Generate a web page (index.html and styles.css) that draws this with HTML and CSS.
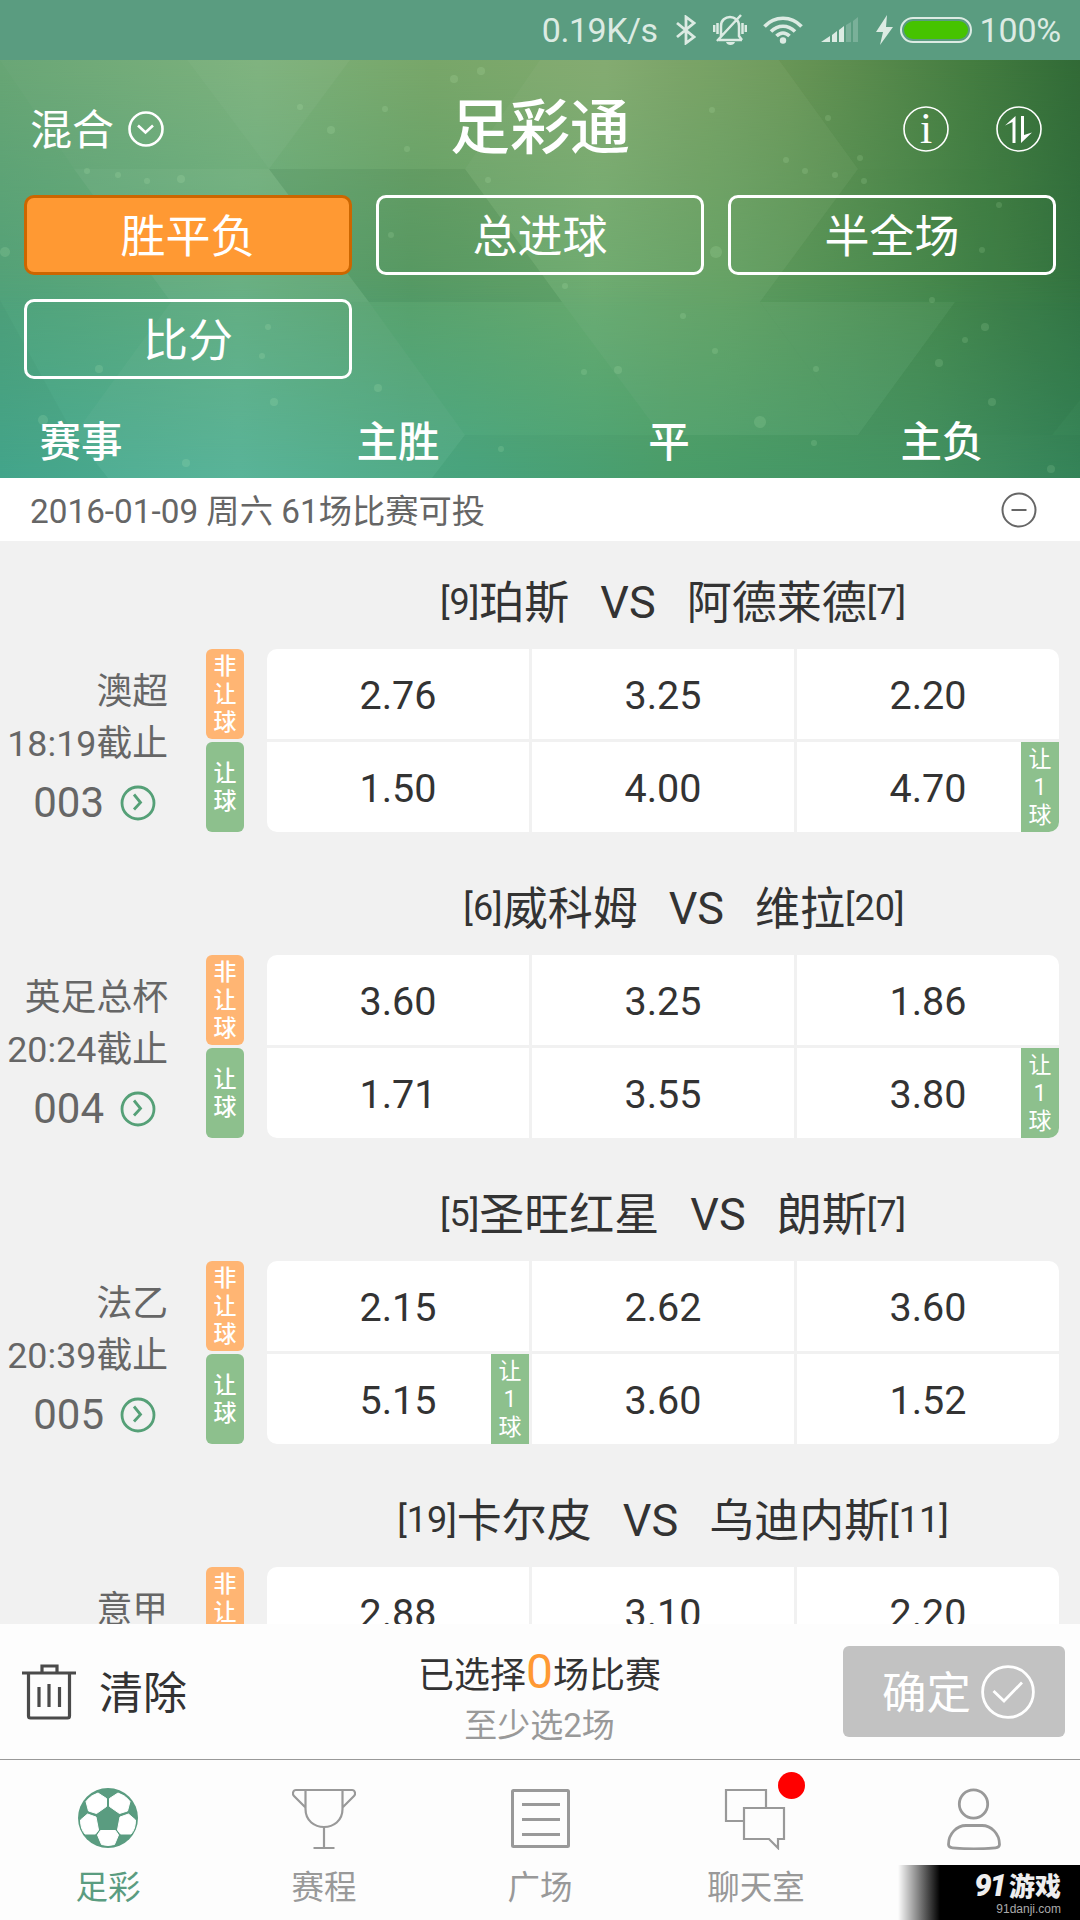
FILE: index.html
```html
<!DOCTYPE html>
<html lang="zh-CN">
<head>
    <meta charset="UTF-8">
    <meta name="viewport" content="width=device-width, initial-scale=1.0">
    <title>足彩通</title>
    <link rel="stylesheet" href="styles.css">
</head>
<body>

    <div class="status">
        <span class="speed">0.19K/s</span>
        <svg class="s-bt" width="20" height="30" viewBox="0 0 20 30"><path d="M1 8l17 14-8 6V2l8 6L1 22" fill="none" stroke="#dcebe3" stroke-width="2.8"/></svg>
        <svg class="s-bell" width="34" height="32" viewBox="0 0 34 32">
            <path d="M6 26h23M8 24V12c0-12 18-12 18 0v10l3 4M28 1L4 27M1.200 11v7M4.500 9v11M29.500 9v11M32.800 11v7" fill="none" stroke="#dcebe3" stroke-width="2.500"/>
            <path d="M13 28h9c-1 4-8 4-9 0z" fill="#dcebe3"/>
        </svg>
        <svg class="s-wifi" width="40" height="28" viewBox="0 0 40 28">
            <path d="M1.500 10.500c10-11 27-11 37 0M8 15.500c7-7 17-7 24 0M13.500 20c4-4 9-4 13 0" fill="none" stroke="#dcebe3" stroke-width="3.600"/>
            <circle cx="20" cy="24.500" r="3.200" fill="#dcebe3"/>
        </svg>
        <svg class="s-signal" width="38" height="26" viewBox="0 0 38 26">
            <path d="M0 25l9-6v6zM11 18l5-4v11h-5zM18 13l5-4v16h-5z" fill="#dcebe3"/>
            <path d="M25 8l5-3v20h-5zM32 4l5-4v25h-5z" fill="#dcebe3" opacity=".25"/>
        </svg>
        <svg class="s-bolt" width="17" height="30" viewBox="0 0 17 30"><path d="M11 0L0 17h7L4 30l13-18h-7z" fill="#dcebe3"/></svg>
        <div class="battery"></div>
        <span class="percent">100%</span>
    </div>

    <header class="header">
        <!-- 三角拼接背景 -->
        <svg class="header-bg" width="1080" height="418" viewBox="0 60 1080 418">
            <g fill="#fff">
                <path d="M187 60L269 169 350 60z" opacity=".04"/>
                <path d="M0 60L74 169H269L187 60z" opacity=".02"/>
                <path d="M74 169H269L369 302H171z" opacity=".05"/>
                <path d="M171 302L74 435 108 478H432L465 435 369 302z" opacity=".03"/>
                <path d="M540 60L465 169 562 302 661 435H858L760 302 858 169 779 60z" opacity=".03"/>
                <path d="M760 302H955L858 435z" opacity=".03"/>
            </g>
            <g fill="#003c1e">
                <path d="M269 169H465L562 302H369z" opacity=".07"/>
                <path d="M858 169L760 302H1080V169z" opacity=".03"/>
                <path d="M779 60L858 169H1080V60z" opacity=".02"/>
                <path d="M955 302L858 435H1052L1080 400V302z" opacity=".04"/>
                <path d="M0 300L74 435 108 478H0z" opacity=".03"/>
                <path d="M465 435H1080V478H432z" opacity=".03"/>
            </g>
            <g fill="#d2ffc8" opacity=".13">
                <circle cx="481" cy="71" r="4"/><circle cx="454" cy="79" r="4"/><circle cx="331" cy="130" r="4"/>
                <circle cx="407" cy="149" r="3"/><circle cx="385" cy="109" r="3"/><circle cx="300" cy="107" r="3"/>
                <circle cx="181" cy="179" r="4"/><circle cx="147" cy="181" r="3"/><circle cx="118" cy="175" r="3"/>
                <circle cx="87" cy="171" r="3"/><circle cx="488" cy="180" r="3"/><circle cx="786" cy="160" r="3"/>
                <circle cx="828" cy="118" r="3"/><circle cx="860" cy="158" r="3"/><circle cx="805" cy="171" r="3"/>
                <circle cx="835" cy="175" r="3"/><circle cx="864" cy="181" r="3"/><circle cx="712" cy="110" r="3"/>
                <circle cx="716" cy="252" r="6"/><circle cx="999" cy="205" r="3"/><circle cx="982" cy="250" r="3"/>
                <circle cx="932" cy="300" r="3"/><circle cx="985" cy="327" r="4"/><circle cx="965" cy="340" r="3"/>
                <circle cx="939" cy="363" r="4"/><circle cx="992" cy="402" r="4"/><circle cx="760" cy="422" r="6"/>
                <circle cx="816" cy="369" r="3"/><circle cx="715" cy="351" r="3"/><circle cx="683" cy="316" r="3"/>
                <circle cx="618" cy="370" r="4"/><circle cx="584" cy="372" r="3"/><circle cx="378" cy="388" r="4"/>
                <circle cx="274" cy="402" r="4"/><circle cx="186" cy="463" r="4"/><circle cx="43" cy="420" r="5"/>
                <circle cx="99" cy="369" r="4"/><circle cx="262" cy="356" r="3"/><circle cx="268" cy="327" r="3"/>
                <circle cx="565" cy="286" r="3"/><circle cx="814" cy="443" r="3"/><circle cx="1051" cy="469" r="4"/>
                <circle cx="5" cy="252" r="5"/><circle cx="391" cy="235" r="3"/><circle cx="501" cy="449" r="3"/>
            </g>
        </svg>

        <div class="topbar">
            <div class="mode">
                <span>混合</span>
                <svg width="38" height="38" viewBox="0 0 38 38" fill="none" stroke="#fff" stroke-width="2.600"><circle cx="19" cy="19" r="16.500"/><path d="M11 15.500l7.500 7 7.500-7"/></svg>
            </div>
            <h1>足彩通</h1>
            <div class="tools">
                <svg width="48" height="48" viewBox="0 0 48 48">
                    <circle cx="24" cy="24" r="22" fill="none" stroke="#fff" stroke-width="1.600"/>
                    <text class="info-i" x="24" y="38" text-anchor="middle">i</text>
                </svg>
                <svg width="48" height="48" viewBox="0 0 48 48">
                    <circle cx="24" cy="24" r="22" fill="none" stroke="#fff" stroke-width="1.600"/>
                    <path d="M17.500 38V17L10 20.500 20.500 11v27zM26 11h3v19l8-2.500L26 38z" fill="#fff"/>
                </svg>
            </div>
        </div>

        <div class="plays">
            <button class="play active">胜平负</button>
            <button class="play">总进球</button>
            <button class="play">半全场</button>
            <button class="play">比分</button>
        </div>

        <div class="columns">
            <span>赛事</span>
            <span>主胜</span>
            <span>平</span>
            <span class="lose">主负</span>
        </div>
    </header>

    <div class="date">
        <span>2016-01-09 周六 61场比赛可投</span>
        <svg width="38" height="38" viewBox="0 0 38 38" fill="none" stroke="#666" stroke-width="2"><circle cx="19" cy="19" r="16.500"/><path d="M11.500 19h15"/></svg>
    </div>

    <main class="list" id="list">
        <!-- 比赛列表 -->
    </main>

    <div class="bar">
        <div class="clear">
            <svg width="54" height="56" viewBox="0 0 54 56" fill="none" stroke="#4a4a4a" stroke-width="3.200"><path d="M0 9h54M20 9V2h15v7M6.500 9v43q0 2 2 2h37q2 0 2-2V9M17 23v20M27 20v23M37.500 23v20"/></svg>
            <span>清除</span>
        </div>
        <div class="picked">
            <p class="count">已选择<b>0</b>场比赛</p>
            <p class="hint">至少选2场</p>
        </div>
        <button class="confirm">
            <span>确定</span>
            <svg width="54" height="54" viewBox="0 0 54 54" fill="none" stroke="#fff" stroke-width="2.800"><circle cx="27" cy="27" r="25.400"/><path d="M12.500 26L23 36 41 17.500"/></svg>
        </button>
    </div>

    <nav class="nav">
        <a class="on">
            <svg width="64" height="64" viewBox="0 0 64 64">
                <circle cx="32" cy="32" r="30" fill="#5a9c80"/>
                <g fill="#fff" stroke="#fff" stroke-width="1" stroke-linejoin="round">
                    <path d="M30.500 12.500v8L20.500 27.500 12.500 25 10 15.500Q14 9.500 22 7z"/>
                    <path d="M33.500 12.500v8l10 7 8-2.500 2.500-9.500Q50 9.500 42 7z"/>
                    <path d="M11.500 28l8.500 3 2.500 13-3 4H9Q4.500 43 4.500 34z"/>
                    <path d="M52.500 28l-8.500 3-2.500 13 3 4H55Q59.500 43 59.500 34z"/>
                    <path d="M24.500 44.500h15l3 4.500-4 9.500Q32 60.500 25.500 58.500l-4-9.500z"/>
                </g>
            </svg>
            足彩
        </a>
        <a>
            <svg width="64" height="64" viewBox="0 0 64 64" fill="none" stroke="#999" stroke-width="2.200"><path d="M4 4h56c3 0 4 4 2 6L51 21M4 4C1 4 0 8 2 10L13 21M13.500 4v19c0 24 37 24 37 0V4M32 41v21M21.500 62h21"/></svg>
            赛程
        </a>
        <a>
            <svg width="64" height="64" viewBox="0 0 64 64" fill="none" stroke="#999" stroke-width="3"><rect x="4.500" y="4.500" width="56" height="56" rx="1"/><path d="M14 18.500h38M14 33.500h38M14 48.500h38"/></svg>
            广场
        </a>
        <a>
            <svg width="64" height="64" viewBox="0 0 64 64" fill="none" stroke="#999" stroke-width="2.200"><path d="M20 35H2V4h40v18M20 22h40v31h-6v9l-9-9H20z"/></svg>
            聊天室
            <i class="dot"></i>
        </a>
        <a>
            <svg width="64" height="64" viewBox="0 0 64 64" fill="none" stroke="#999" stroke-width="2.800"><circle cx="33.500" cy="18" r="14.200"/><path d="M26 39.500h16c9 0 17.500 8 17.500 19 0 2-1 3-4 3.300-11 1-32 1-43 0-3-.3-4-1.300-4-3.300 0-11 8.500-19 17.500-19z"/></svg>
        </a>
    </nav>

    <div class="mark">
        <p class="mark-name"><em>91</em>游戏</p>
        <p class="mark-url">91danji.com</p>
    </div>

    <script>
        // give: 让球标签所在的列
        const matches = [
            { league: '澳超', time: '18:19', no: '003', home: ['[9]', '珀斯'], away: ['阿德莱德', '[7]'], odds: ['2.76', '3.25', '2.20'], letOdds: ['1.50', '4.00', '4.70'], give: 2 },
            { league: '英足总杯', time: '20:24', no: '004', home: ['[6]', '威科姆'], away: ['维拉', '[20]'], odds: ['3.60', '3.25', '1.86'], letOdds: ['1.71', '3.55', '3.80'], give: 2, indent: true },
            { league: '法乙', time: '20:39', no: '005', home: ['[5]', '圣旺红星'], away: ['朗斯', '[7]'], odds: ['2.15', '2.62', '3.60'], letOdds: ['5.15', '3.60', '1.52'], give: 0 },
            { league: '意甲', home: ['[19]', '卡尔皮'], away: ['乌迪内斯', '[11]'], odds: ['2.88', '3.10', '2.20'] }
        ];

        const arrow = '<svg width="36" height="36" viewBox="0 0 36 36" fill="none" stroke="#55a077" stroke-width="2.800"><circle cx="18" cy="18" r="16"/><path d="M14 9.500l6.500 8-6.500 7"/></svg>';

        function letRow(m) {
            if (!m.letOdds) return '';
            return m.letOdds.map((o, i) =>
                `<div class="odd">${o}${i === m.give ? '<span class="give">让<br>1<br>球</span>' : ''}</div>`
            ).join('');
        }

        document.getElementById('list').innerHTML = matches.map(m => `
            <section class="match">
                <div class="teams${m.indent ? ' indent' : ''}"><small>${m.home[0]}</small><span class="team">${m.home[1]}</span><span class="vs">VS</span><span class="team">${m.away[0]}</span><small>${m.away[1]}</small></div>
                <div class="info">
                    <p>${m.league}</p>
                    ${m.time ? `<p>${m.time}截止</p><p class="no">${m.no}${arrow}</p>` : ''}
                </div>
                <div class="tags">
                    <span class="tag orange">${m.letOdds ? '非<br>让<br>球' : '非<br>让'}</span>
                    ${m.letOdds ? '<span class="tag green">让<br>球</span>' : ''}
                </div>
                <div class="odds">
                    ${m.odds.map(o => `<div class="odd">${o}</div>`).join('')}
                    ${letRow(m)}
                </div>
            </section>`).join('');
    </script>

</body>
</html>
```

FILE: styles.css
```css
* {
    box-sizing: border-box;
}

body {
    margin: 0;
    width: 1080px;
    height: 1920px;
    position: relative;
    overflow: hidden;
    display: flex;
    flex-direction: column;
    background: #f1f1f1;
    color: #333;
    font-family: Roboto, "Noto Sans CJK SC", sans-serif;
}

h1, p {
    margin: 0;
    font-weight: normal;
}

svg {
    display: block;
    flex: none;
}

button {
    font-family: inherit;
    padding: 0;
    color: #fff;
}

/* 状态栏 */
.status {
    height: 60px;
    flex: none;
    display: flex;
    align-items: center;
    justify-content: flex-end;
    padding-right: 19px;
    background: #5a9c80;
    color: #dcebe3;
    font-size: 34px;
}

.speed { letter-spacing: -.5px; }
.s-bt { margin-left: 18px; }
.s-bell { margin-left: 17px; }
.s-wifi { margin-left: 16px; }
.s-signal { margin-left: 18px; }
.s-bolt { margin-left: 17px; }

.battery {
    width: 72px;
    height: 26px;
    margin-left: 7px;
    border: 2px solid #dcebe3;
    border-radius: 13px;
    padding: 2px;
    background: #46c300;
    background-clip: content-box;
}

.percent {
    margin-left: 8px;
    letter-spacing: -.2px;
}

/* 顶部 */
.header {
    height: 418px;
    flex: none;
    position: relative;
    color: #fff;
    background: linear-gradient(90deg, #46a98f, #54b296 22%, #4ba882 43%, #4ca16d 62%, #469666 85%, #37875b);
}

.header::before,
.header::after {
    content: "";
    position: absolute;
    left: 0;
    top: 0;
    width: 100%;
    height: 100%;
}

.header::before {
    background: linear-gradient(90deg, #51a178, #60ab7c 22%, #5aa068 38%, #6aaa6d 55%, #619f61 68%, #488a4d 87%, #357542);
    -webkit-mask-image: linear-gradient(#000 50%, transparent);
    mask-image: linear-gradient(#000 50%, transparent);
}

.header::after {
    background: linear-gradient(90deg, #68a574, #7bb07a 24%, #78a669 40%, #80a96d 56%, #6b9757 73%, #467e41 90%, #336c37);
    -webkit-mask-image: linear-gradient(#000, transparent 60%);
    mask-image: linear-gradient(#000, transparent 60%);
}

.header-bg {
    position: absolute;
    z-index: 1;
    left: 0;
    top: 0;
}

.topbar {
    position: relative;
    z-index: 2;
    height: 135px;
    display: grid;
    grid-template-columns: 1fr auto 1fr;
    align-items: center;
    padding: 2px 37px 0 30px;
}

.topbar h1 {
    padding-left: 7px;
    font-size: 60px;
    line-height: 72px;
    font-weight: 500;
}

.mode {
    display: flex;
    align-items: center;
    gap: 13px;
    font-size: 42px;
}

.mode span {
    padding-bottom: 4px;
}

.tools {
    display: flex;
    justify-content: flex-end;
    gap: 45px;
}

.info-i {
    font: 44px "Liberation Serif", serif;
    fill: #fff;
}

.plays {
    position: relative;
    z-index: 2;
    display: grid;
    grid-template-columns: repeat(3, 328px);
    grid-auto-rows: 80px;
    gap: 24px;
    padding: 0 24px;
}

.play {
    border: 3px solid #fff;
    border-radius: 10px;
    background: none;
    padding-bottom: 3px;
    font-size: 45px;
}

.play.active {
    background: #ff9933;
    border-color: #cc6600;
}

.columns {
    position: relative;
    z-index: 2;
    display: grid;
    grid-template-columns: 162px 472px 70px 376px;
    text-align: center;
    padding-top: 41px;
    font-size: 41.5px;
    line-height: 46px;
    font-weight: 500;
}

.lose {
    padding-left: 100px;
}

/* 日期 */
.date {
    height: 63px;
    flex: none;
    display: flex;
    align-items: center;
    justify-content: space-between;
    padding: 0 42px 0 30px;
    background: #fff;
    color: #666;
    font-size: 33.3px;
}

.date span {
    padding-bottom: 3px;
}

/* 比赛列表 */
.list {
    height: 1083px;
    flex: none;
    overflow: hidden;
}

.match {
    display: grid;
    grid-template-columns: 206px 38px 817px;
    grid-template-rows: 108px 183px;
    padding-bottom: 15px;
}

.teams {
    grid-column: 1 / -1;
    display: flex;
    align-items: center;
    justify-content: center;
    padding: 14px 0 0 285px;
    font-size: 45px;
}

.teams.indent {
    padding-left: 307px;
}

.teams small {
    font-size: 36px;
}

.team {
    padding-bottom: 5px;
}

.vs {
    margin: 0 31px;
}

.info {
    padding: 17px 38px 0 0;
    text-align: right;
    font-size: 35.8px;
    line-height: 52px;
    color: #666;
}

.info .no {
    display: flex;
    align-items: center;
    justify-content: flex-end;
    gap: 16px;
    padding: 7px 12px 0 0;
    font-size: 42px;
}

.tags {
    display: flex;
    flex-direction: column;
    gap: 3px;
}

.tag {
    height: 90px;
    padding-top: 4px;
    border-radius: 6px;
    color: #fff;
    font-size: 23px;
    line-height: 28px;
    font-weight: 500;
    text-align: center;
}

.tag.orange {
    background: #ffb573;
}

.tag.green {
    padding-top: 18px;
    background: #8dc08d;
}

.odds {
    margin-left: 23px;
    width: 792px;
    display: grid;
    grid-template-columns: repeat(3, 1fr);
    grid-auto-rows: 90px;
    gap: 3px;
    border-radius: 10px;
    overflow: hidden;
}

.odd {
    position: relative;
    display: flex;
    align-items: center;
    justify-content: center;
    padding-top: 3px;
    background: #fff;
    font-size: 39.5px;
}

.give {
    position: absolute;
    right: 0;
    top: 0;
    width: 38px;
    height: 90px;
    padding-top: 4px;
    background: #8dc08d;
    color: #fff;
    font-size: 23px;
    line-height: 28px;
    text-align: center;
}

/* 底部操作 */
.bar {
    height: 136px;
    flex: none;
    display: grid;
    grid-template-columns: 222px 1fr 222px;
    align-items: center;
    padding: 0 15px 0 22px;
    background: #fdfdfd;
    border-bottom: 1px solid #999;
}

.clear {
    display: flex;
    align-items: center;
    gap: 23px;
    font-size: 44px;
}

.clear span,
.confirm span {
    padding-bottom: 4px;
}

.picked {
    padding: 14px 8px 0 0;
    text-align: center;
}

.count {
    font-size: 36px;
    line-height: 50px;
}

.count b {
    font-size: 48px;
    font-weight: normal;
    color: #ff9933;
}

.hint {
    font-size: 33px;
    line-height: 50px;
    color: #999;
}

.confirm {
    width: 222px;
    height: 91px;
    display: flex;
    align-items: center;
    justify-content: center;
    gap: 10px;
    padding-left: 9px;
    border: 0;
    border-radius: 6px;
    background: #c2c2c2;
    font-size: 44.5px;
}

/* 导航 */
.nav {
    height: 160px;
    flex: none;
    display: grid;
    grid-template-columns: repeat(5, 1fr);
    background: #fdfdfd;
}

.nav a {
    position: relative;
    display: flex;
    flex-direction: column;
    align-items: center;
    gap: 16px;
    padding-top: 26px;
    color: #999;
    font-size: 32.5px;
    line-height: 44px;
}

.nav .on {
    color: #5a9c80;
}

.dot {
    position: absolute;
    left: 130px;
    top: 12px;
    width: 27px;
    height: 27px;
    border-radius: 50%;
    background: #f00;
}

/* 右下角角标 */
.mark {
    position: absolute;
    right: 0;
    bottom: 0;
    width: 182px;
    height: 55px;
    padding: 6px 19px 0 0;
    text-align: right;
    background: linear-gradient(90deg, rgba(0, 0, 0, 0), #000 42px);
}

.mark-name {
    color: #eee;
    font-size: 26px;
    line-height: 29px;
    font-weight: 900;
}

.mark-name em {
    margin-right: 4px;
    font-size: 31px;
    letter-spacing: -2px;
}

.mark-url {
    color: #aaa;
    font: 12px/14px "Liberation Sans", sans-serif;
}
```
